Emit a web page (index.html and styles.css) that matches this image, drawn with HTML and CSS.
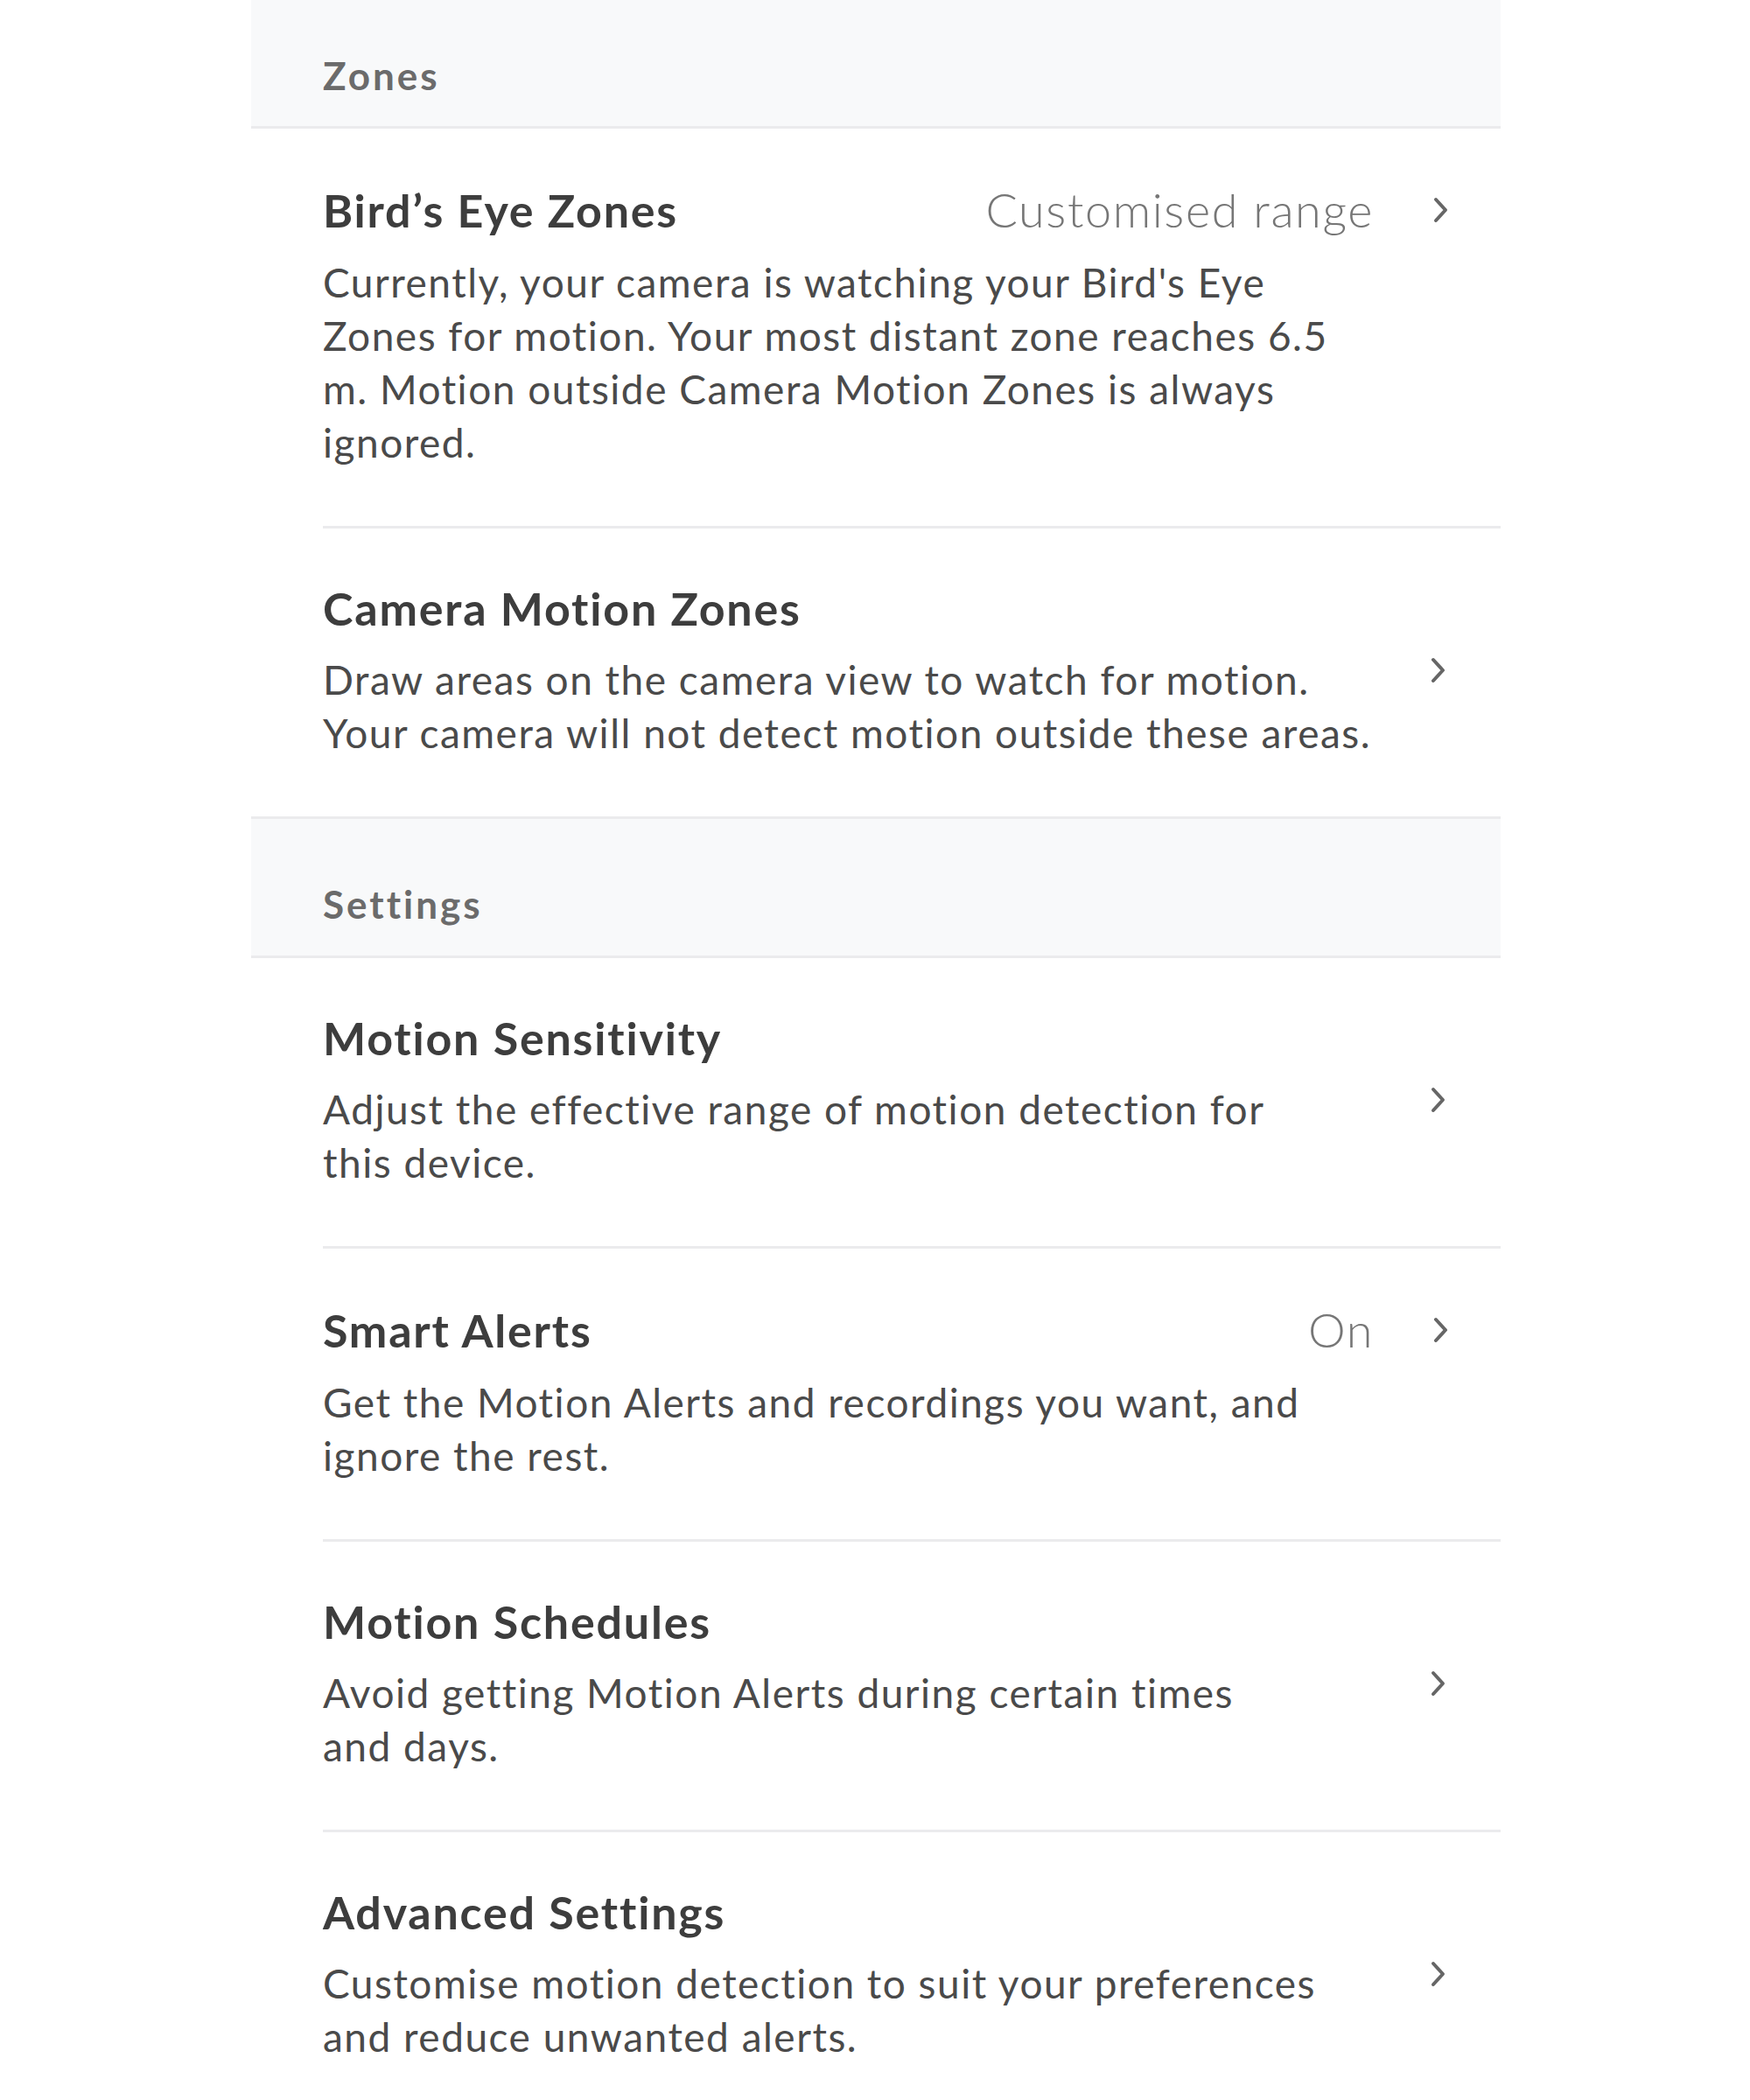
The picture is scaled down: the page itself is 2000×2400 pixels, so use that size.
FILE: index.html
```html
<!DOCTYPE html>
<html lang="en">
<head>
<meta charset="UTF-8">
<title>Motion Settings</title>
<link rel="stylesheet" href="styles.css">
</head>
<body>

<div class="panel">

<div class="group-header first">Zones</div>

<div class="row">
<div class="row-body">
<div class="row-top">
<h3>Bird’s Eye Zones</h3>
<span class="value">Customised range</span>
<svg class="chevron" viewBox="0 0 24 30"><path d="M5 3 L16 15 L5 27"/></svg>
</div>
<p>Currently, your camera is watching your Bird's Eye<br>Zones for motion. Your most distant zone reaches 6.5<br>m. Motion outside Camera Motion Zones is always<br>ignored.</p>
</div>
</div>

<div class="row">
<div class="row-body">
<h3>Camera Motion Zones</h3>
<p>Draw areas on the camera view to watch for motion.<br>Your camera will not detect motion outside these areas.</p>
</div>
<svg class="chevron" viewBox="0 0 24 30"><path d="M5 3 L16 15 L5 27"/></svg>
</div>

<div class="group-header">Settings</div>

<div class="row">
<div class="row-body">
<h3>Motion Sensitivity</h3>
<p>Adjust the effective range of motion detection for<br>this device.</p>
</div>
<svg class="chevron" viewBox="0 0 24 30"><path d="M5 3 L16 15 L5 27"/></svg>
</div>

<div class="row">
<div class="row-body">
<div class="row-top">
<h3>Smart Alerts</h3>
<span class="value">On</span>
<svg class="chevron" viewBox="0 0 24 30"><path d="M5 3 L16 15 L5 27"/></svg>
</div>
<p>Get the Motion Alerts and recordings you want, and<br>ignore the rest.</p>
</div>
</div>

<div class="row">
<div class="row-body">
<h3>Motion Schedules</h3>
<p>Avoid getting Motion Alerts during certain times<br>and days.</p>
</div>
<svg class="chevron" viewBox="0 0 24 30"><path d="M5 3 L16 15 L5 27"/></svg>
</div>

<div class="row">
<div class="row-body">
<h3>Advanced Settings</h3>
<p>Customise motion detection to suit your preferences<br>and reduce unwanted alerts.</p>
</div>
<svg class="chevron" viewBox="0 0 24 30"><path d="M5 3 L16 15 L5 27"/></svg>
</div>

</div>

</body>
</html>
```

FILE: styles.css
```css
/* Reset */
* {
margin: 0;
padding: 0;
box-sizing: border-box;
}

body {
background-color: #ffffff;
font-family: 'Lato', 'Open Sans', sans-serif;
color: #4a4a4a;
}

/* Settings list */
.panel {
width: 1428px;
margin-left: 287px;
}

.group-header {
background-color: #f8f9fa;
border-top: 3px solid #ebebed;
border-bottom: 3px solid #ebebed;
padding: 72px 0 34px 82px;
font-size: 44px;
line-height: 50px;
font-weight: 700;
letter-spacing: 3px;
color: #6b6b6b;
}

.group-header.first {
border-top: none;
padding-top: 61px;
padding-bottom: 33px;
}

.row {
display: flex;
align-items: center;
margin-left: 82px;
padding: 60px 58px 65px 0;
}

.row + .row {
border-top: 3px solid #ebebed;
}

.row-body {
flex: 1;
}

.row-top {
display: flex;
align-items: center;
}

.row-top h3 {
flex: 1;
}

.row h3 {
font-size: 52px;
line-height: 62px;
font-weight: 700;
letter-spacing: 1.8px;
color: #3d3d3d;
margin-bottom: 20px;
}

.row p {
font-size: 46px;
line-height: 61px;
letter-spacing: 1.5px;
color: #4a4a4a;
}

.value {
font-size: 54px;
font-weight: 300;
letter-spacing: 1.6px;
color: #767676;
margin-right: 66px;
margin-bottom: 20px;
}

.chevron {
width: 24px;
height: 30px;
fill: none;
stroke: #666666;
stroke-width: 4;
stroke-linecap: round;
stroke-linejoin: round;
}

.row-top .chevron {
margin-right: -3px;
margin-bottom: 20px;
}
```
